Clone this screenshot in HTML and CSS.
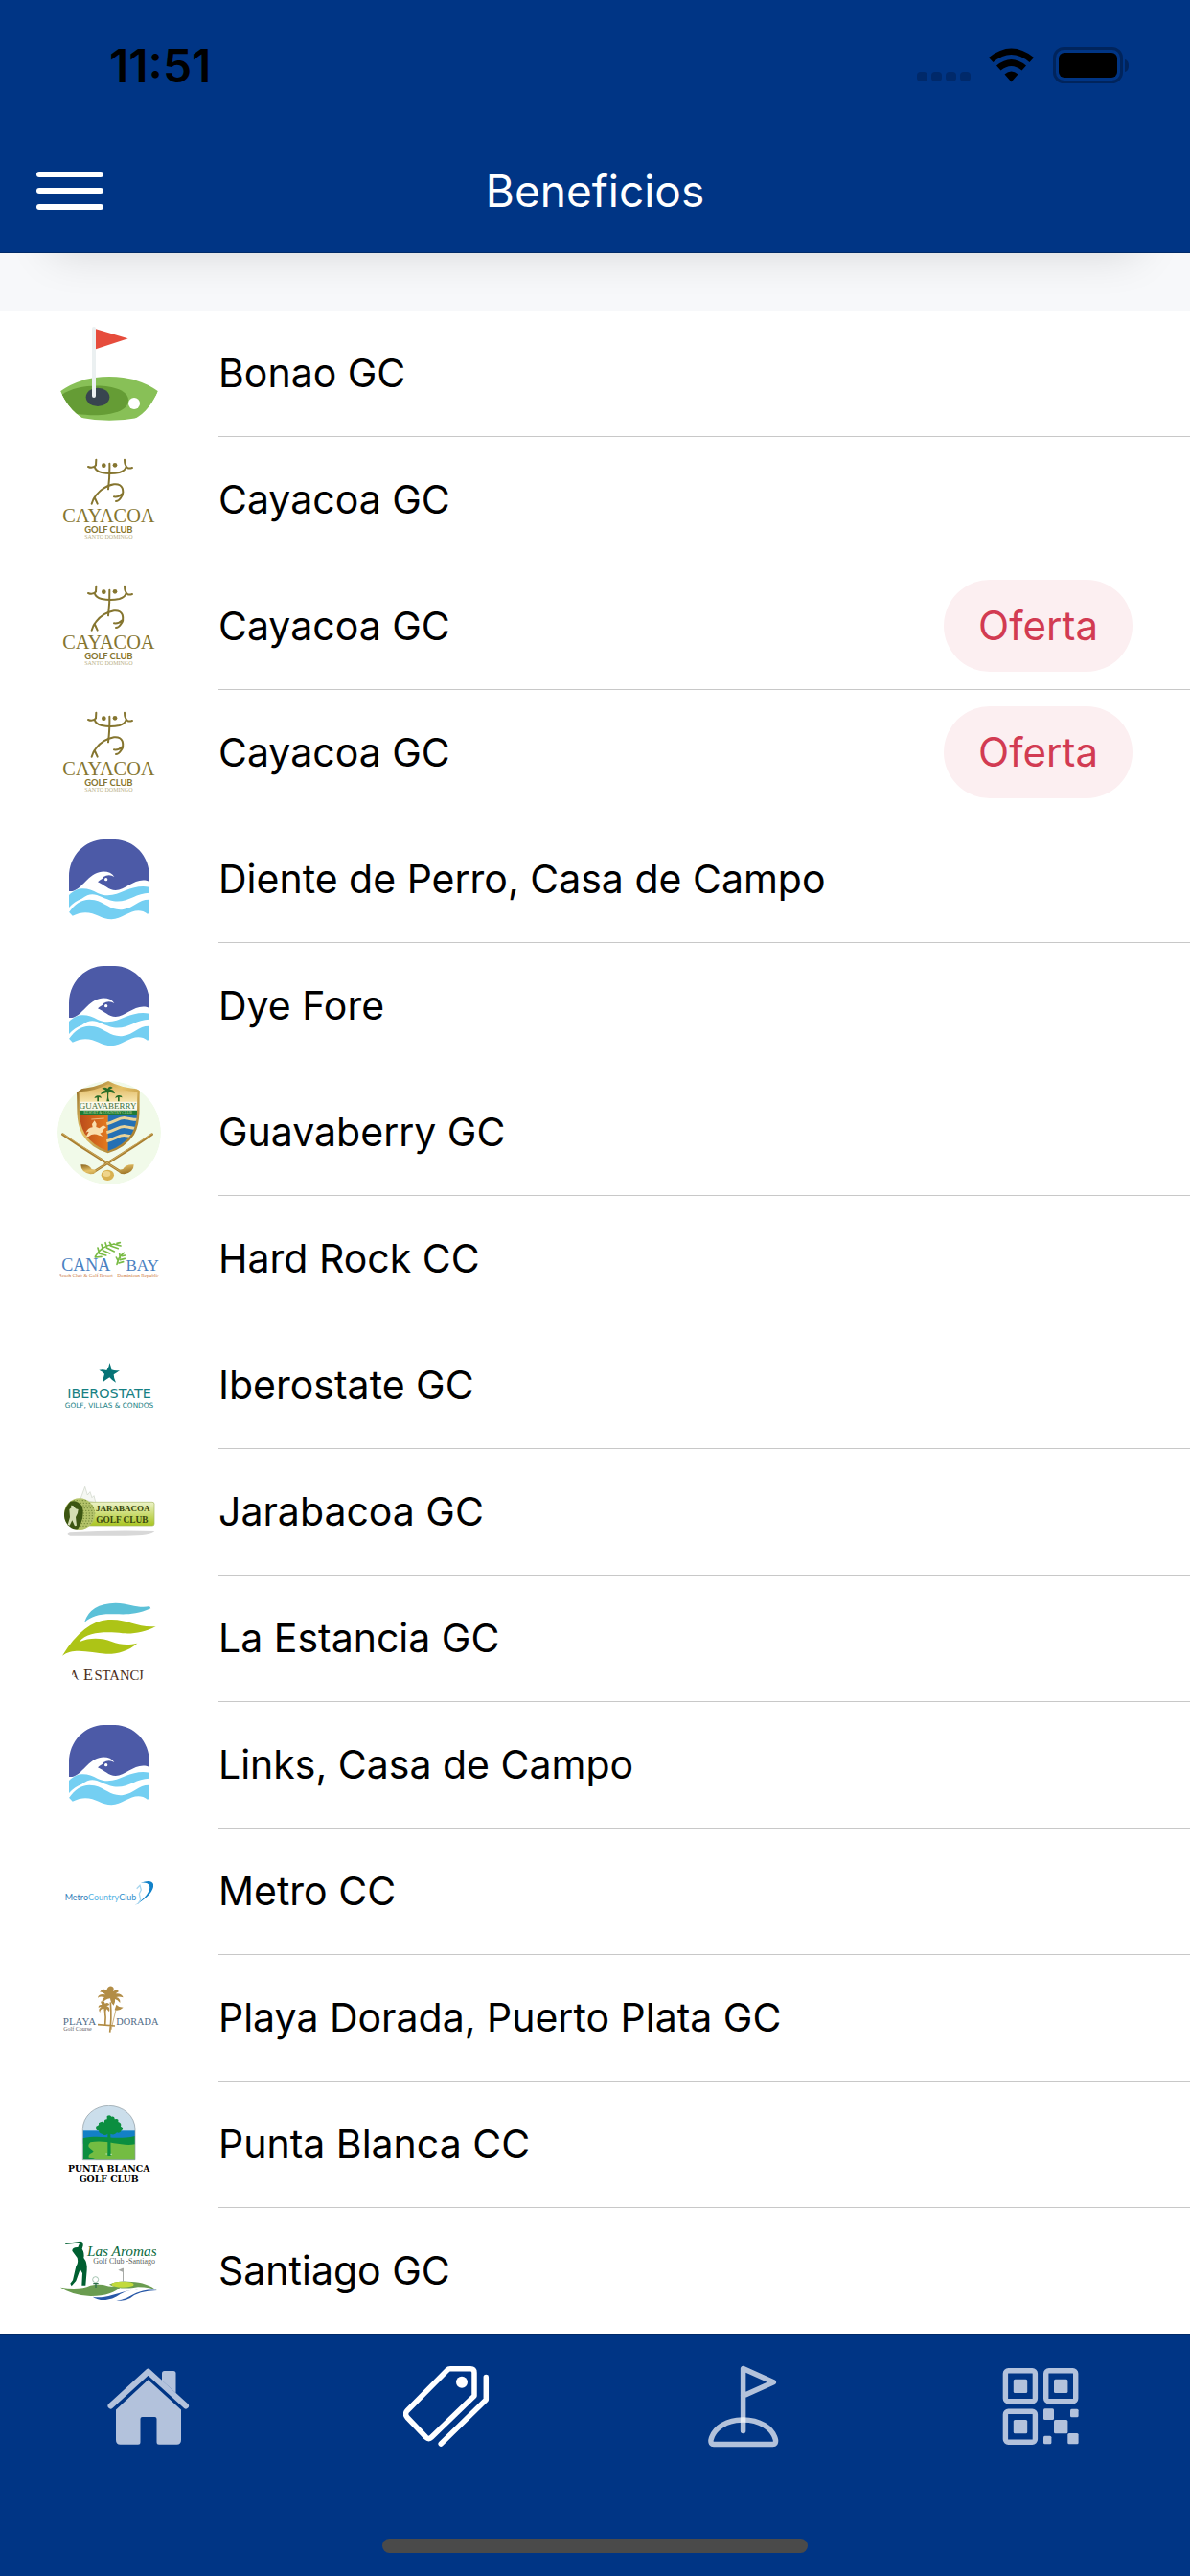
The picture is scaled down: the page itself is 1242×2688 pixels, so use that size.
FILE: index.html
```html
<!DOCTYPE html>
<html lang="es">
<head>
<meta charset="UTF-8" />
<meta name="viewport" content="width=device-width, initial-scale=1" />
<title>Beneficios</title>
<link rel="stylesheet" href="styles.css">
</head>
<body>
  <!-- logos used by more than one club -->
  <svg class="sprites" aria-hidden="true">
    <symbol id="logo-cayacoa" viewBox="60 429 324 324">
      <g fill="none" stroke="#85752f" stroke-width="6" stroke-linecap="round" stroke-linejoin="round">
        <path d="M156 486q14 6 24-4l1-18M176 486q4 14 22 18q28 6 56 0q18-6 20-16M270 464q0 18 10 26q6 2 14-1" />
        <path d="M223 476q1 40-4 80" />
        <path d="M167 602q4-16 14-27q22-28 56-34q20-2 26 12q6 20-6 32q-6 9-14 9M264 570q-12 12-27 10M176 582l9 20" />
      </g>
      <circle cx="205" cy="482" r="7" fill="#85752f" />
      <circle cx="240" cy="481" r="7" fill="#85752f" />
      <text class="serif" x="220" y="661" font-size="61" fill="#85752f">CAYACOA</text>
      <text class="sans bold" x="220" y="693" font-size="28" fill="#85752f">GOLF CLUB</text>
      <text class="serif" x="220" y="712" font-size="18" fill="#b9b088">SANTO DOMINGO</text>
    </symbol>
    <symbol id="logo-campo" viewBox="60 42 324 324">
      <path fill="#4c5aa7" d="M96 240V195C96 128 146 80 204 78h36c60 2 108 50 108 117v15c-40-18-72 26-106 27c-22 0-36-18-56-26q6-6 14-10q2-8 12-10q14-4 26 4q-12-18-40-16c-42 5-60 54-92 61z" />
      <circle cx="212" cy="203" r="5" fill="#fff" />
      <path fill="#74cff2" d="M96 252c30-30 60-22 90-6c30 14 60 4 86-8c26-11 50-16 76-11v18c-44 0-66 32-112 26c-44-10-62-38-100-8c-16 6-28 14-40 28z" />
      <path fill="#74cff2" d="M96 306c20-30 48-46 80-38c34 8 52 34 90 29c34-6 48-32 82-31v40l-5 6c-40-32-72 14-114 16c-40 0-64-40-122-11z" />
    </symbol>
  </svg>

  <header class="header">
    <div class="status-bar">
      <span class="clock">11:51</span>
      <svg class="status-icons" viewBox="0 0 222 38" aria-hidden="true">
        <g fill="#00296a">
          <rect x="0" y="26" width="11" height="10" rx="4" />
          <rect x="15" y="26" width="11" height="10" rx="4" />
          <rect x="30" y="26" width="11" height="10" rx="4" />
          <rect x="45" y="26" width="11" height="10" rx="4" />
        </g>
        <path d="M75 11Q98.500-8 122 11l-4.500 5Q98.500 0 79.500 16z" />
        <path d="M83 19.500q15.500-13 31 0l-4.500 5q-11-9-22 0z" />
        <path d="M91.500 28.500q7-6 14 0l-7 8z" />
        <rect x="143.500" y="1.500" width="70" height="35" rx="10" fill="none" stroke="#00245c" stroke-width="3" />
        <rect x="148" y="6" width="61" height="26" rx="6" />
        <path fill="#00245c" d="M217 13q4 1 4 6.500t-4 6.500z" />
      </svg>
    </div>
    <div class="nav-bar">
      <button class="menu" type="button" aria-label="Menú"><span></span><span></span><span></span></button>
      <h1>Beneficios</h1>
    </div>
  </header>

  <main>
    <div class="spacer"></div>
    <ul class="clubs">
      <li><a href="#">
        <svg class="logo" viewBox="60 33 324 324" aria-hidden="true">
          <path fill="#88c057" d="M69 250Q130 205 222 204q92 1 153 46c-16 34-36 62-62 83q-92 17-178 0c-28-18-50-50-66-83z" />
          <path fill="#659c35" d="M74 260c60-42 208-36 208 18c0 42-86 54-162 42c-20-17-34-38-46-60z" />
          <ellipse cx="186" cy="268" rx="37" ry="29" fill="#38454f" />
          <path stroke="#ebf0f1" stroke-width="12" stroke-linecap="round" d="M174 54v210" />
          <path fill="#e64c3c" d="M180 55l101 30l-101 33z" />
          <circle cx="300" cy="288" r="18" fill="#fff" />
        </svg>
        <div class="cell"><span>Bonao GC</span></div>
      </a></li>
      <li><a href="#">
        <svg class="logo" aria-hidden="true"><use href="#logo-cayacoa" /></svg>
        <div class="cell"><span>Cayacoa GC</span></div>
      </a></li>
      <li><a href="#">
        <svg class="logo" aria-hidden="true"><use href="#logo-cayacoa" /></svg>
        <div class="cell"><span>Cayacoa GC</span><span class="badge">Oferta</span></div>
      </a></li>
      <li><a href="#">
        <svg class="logo" aria-hidden="true"><use href="#logo-cayacoa" /></svg>
        <div class="cell"><span>Cayacoa GC</span><span class="badge">Oferta</span></div>
      </a></li>
      <li><a href="#">
        <svg class="logo" aria-hidden="true"><use href="#logo-campo" /></svg>
        <div class="cell"><span>Diente de Perro, Casa de Campo</span></div>
      </a></li>
      <li><a href="#">
        <svg class="logo" aria-hidden="true"><use href="#logo-campo" /></svg>
        <div class="cell"><span>Dye Fore</span></div>
      </a></li>
      <li><a href="#">
        <svg class="logo" viewBox="60 54 324 324" aria-hidden="true">
          <defs>
            <linearGradient id="gold" x1="0" y1="0" x2="1" y2="1">
              <stop offset="0" stop-color="#8a6420" /><stop offset=".4" stop-color="#e6c267" /><stop offset="1" stop-color="#8f651b" />
            </linearGradient>
            <linearGradient id="sand" x1="0" y1="0" x2="0" y2="1">
              <stop offset="0" stop-color="#d9ad50" /><stop offset="1" stop-color="#f8e6ae" />
            </linearGradient>
            <linearGradient id="rust" x1="0" y1="0" x2="1" y2="0">
              <stop offset="0" stop-color="#b6461a" /><stop offset="1" stop-color="#e47a1e" />
            </linearGradient>
            <clipPath id="shield"><path d="M127 88q54-2 92-24q38 22 92 24c-4 54 4 92-18 130q-26 38-75 55q-49-17-73-55c-22-38-14-76-18-130z" /></clipPath>
          </defs>
          <circle cx="222" cy="216" r="162" fill="#f1fae9" />
          <g fill="none" stroke="#a87e30" stroke-width="8" stroke-linecap="round">
            <path d="M76 221l50 34l136 86M356 221l-50 34l-136 86" />
            <path stroke="#dfc070" stroke-width="2" d="M76 219l180 118M356 219l-180 118" />
          </g>
          <path fill="url(#gold)" d="M133 316q26-2 34 14l12 2q4 12-16 14q-30-6-30-30zM299 316q-26-2-34 14l-12 2q-4 12 16 14q30-6 30-30z" />
          <path fill="url(#gold)" d="M119 80q60-4 100-26q40 22 99 26c-4 54 6 96-18 142q-28 42-82 58q-54-16-80-58c-24-46-14-88-19-142z" />
          <g clip-path="url(#shield)">
            <path fill="url(#sand)" d="M120 60h200v60H120z" />
            <path fill="url(#rust)" d="M120 160h98v120h-98z" />
            <path fill="#2570b4" d="M218 160h100v120H218z" />
            <path fill="none" stroke="#ead398" stroke-width="9" d="M214 188c28-6 38-20 58-18s30 8 44 4M214 215c28-6 38-20 58-18s30 8 44 4M214 242c28-6 38-20 58-18s30 8 44 4" />
            <path fill="#fbf9ec" d="M120 119h200v28H120z" />
            <path fill="#1e7a36" d="M120 146h200v16H120z" />
          </g>
          <path fill="#286c27" d="M214 118q4-18 1-28l-20 6q4-12 16-12l-12-8q12-4 18 2q6-12 16-3l-10 6q14-2 17 13l-19-6q-4 18 2 30zM184 118v-12l-9 2q4-9 11-8q10-2 12 7l-9-2v13zM249 118v-13l-9 2q4-9 11-8q10-2 12 7l-9-2v14z" />
          <path fill="#f9dfae" d="M148 218q6-18 22-19l-2-10l8-11l6 10l-1 10l10 4l12-9l10 6l-8 5q-2 12-12 14l9 9l-12-3q-12-6-24-2l-10 7l-6-2l8-14q-6-2-10 5z" />
          <path stroke="#f9dfae" stroke-width="2" d="M166 174l40-3" />
          <text class="serif" x="218" y="141" font-size="27" fill="#426f37">GUAVABERRY</text>
          <text class="serif" x="218" y="157" font-size="12" fill="#c3dca6">RESORT &amp; COUNTRY CLUB</text>
          <ellipse cx="217" cy="349" rx="20" ry="17" fill="#d8b150" />
          <ellipse cx="214" cy="345" rx="12" ry="9" fill="#efd58b" />
        </svg>
        <div class="cell"><span>Guavaberry GC</span></div>
      </a></li>
      <li><a href="#">
        <svg class="logo" viewBox="60 450 324 324" aria-hidden="true">
          <g fill="none" stroke="#79bb45" stroke-width="5" stroke-linecap="round">
            <path d="M178 604q18-34 60-40M190 590l-4-14M202 580l-4-14M214 572l-4-12M227 565l-4-6M178 606l20-2M190 594l22 6M202 584l22 10M214 576l24 12M226 570l24 8M236 564l22 6M246 562l10-2" />
            <path d="M246 628q4-24 22-36M250 618l-6-12M256 608l-2-14M252 624l14-4M256 614l15-4M262 602l10-2" />
          </g>
          <text class="serif" x="149" y="649" font-size="54" fill="#4a81c1">CANA</text>
          <text class="serif" x="326" y="649" font-size="51" fill="#4a81c1">BAY</text>
          <text class="serif" x="221" y="668" font-size="16" fill="#cf8247">Beach Club &amp; Golf Resort - Dominican Republic</text>
        </svg>
        <div class="cell"><span>Hard Rock CC</span></div>
      </a></li>
      <li><a href="#">
        <svg class="logo" viewBox="60 66 324 324" aria-hidden="true">
          <path fill="#067477" d="M223 156q5 12 6 22q12 4 26 2q-10 8-19 13q0 12 7 25q-12-6-20-16q-10 6-21 15q1-14 5-26q-6-8-17-12q12-3 24 1q8-10 9-24z" />
          <text class="wide" x="222" y="267" font-size="43" fill="#168083">IBEROSTATE</text>
          <text class="wide" x="222" y="297" font-size="22" fill="#168083">GOLF, VILLAS &amp; CONDOS</text>
        </svg>
        <div class="cell"><span>Iberostate GC</span></div>
      </a></li>
      <li><a href="#">
        <svg class="logo" viewBox="60 462 324 324" aria-hidden="true">
          <defs>
            <linearGradient id="lime" x1="0" y1="0" x2="0" y2="1">
              <stop offset="0" stop-color="#edf3c8" /><stop offset="1" stop-color="#a9c520" />
            </linearGradient>
          </defs>
          <path fill="#d8d8d8" d="M98 688q130-8 266-4q-10 14-90 14H100q-16-4-2-10z" />
          <path fill="#f5f7f3" stroke="#cbd3c5" stroke-width="2" d="M132 582l14-38l8 26l8-10l6 18l6-6l6 22z" />
          <rect x="150" y="592" width="213" height="74" rx="6" fill="url(#lime)" stroke="#a5b660" stroke-width="2" />
          <ellipse cx="129" cy="629" rx="48" ry="49" fill="#b4c36a" />
          <path fill="none" stroke="#75893a" stroke-width="3" stroke-dasharray="4 5" d="M110 587h44M104 595h62M130 603h42M134 611h42M138 619h38M140 627h38M140 635h36M140 643h34M138 651h32M134 659h30M130 667h22" />
          <path fill="#3c5512" d="M100 590q-34 38-8 74q16 16 32 12q22-34 14-70q-16-22-38-16z" />
          <path fill="#d5deb4" d="M102 602l7 1l8 10l8 2l-2 12l-6 12l3 26l-6 2l-8-18l-8 16l-6-2l7-24l-2-24l7-6z" />
          <text class="serif bold" x="265" y="621" font-size="27" fill="#36450f">JARABACOA</text>
          <text class="serif bold" x="262" y="657" font-size="28" fill="#36450f">GOLF CLUB</text>
        </svg>
        <div class="cell"><span>Jarabacoa GC</span></div>
      </a></li>
      <li><a href="#">
        <svg class="logo" viewBox="60 78 324 324" aria-hidden="true">
          <defs><clipPath id="cut"><path d="M104 330h229v45H104z" /></clipPath></defs>
          <path fill="#5cc1d8" d="M144 189q18-60 98-61c46 2 72 18 107 10l3 7c-48 22-82 18-112 18c-44-2-72 4-96 26z" />
          <path fill="#adc416" d="M75 293q66-108 144-113c60-4 90 26 149 21c-36 20-70 24-104 22c-42-5-110-8-136 27c34-16 74-12 100-2c30 12 54 12 82 6c-30 26-64 34-98 33c-46-2-100-22-137 6z" />
          <g clip-path="url(#cut)" fill="#4b2d20">
            <text class="serif" x="112" y="368" font-size="42">A</text>
            <text class="serif" x="156" y="368" font-size="49">E</text>
            <text class="serif" x="253" y="368" font-size="44">STANCI</text>
          </g>
        </svg>
        <div class="cell"><span>La Estancia GC</span></div>
      </a></li>
      <li><a href="#">
        <svg class="logo" aria-hidden="true"><use href="#logo-campo" /></svg>
        <div class="cell"><span>Links, Casa de Campo</span></div>
      </a></li>
      <li><a href="#">
        <svg class="logo" viewBox="60 -30 324 324" aria-hidden="true">
          <text class="sans" x="195" y="160" font-size="27" fill="#2f7cb8">Metro<tspan fill="#56b4e4">Country</tspan><tspan fill="#2f8fcd">Club</tspan></text>
          <path fill="#1282c9" d="M320 104q34-12 40 4q4 30-58 67q52-38 46-62q-6-12-28-9z" />
          <path fill="none" stroke="#a9d7ef" stroke-width="4" d="M308 122l10-10l4 14l-6 12l4 20l-8 12" />
        </svg>
        <div class="cell"><span>Metro CC</span></div>
      </a></li>
      <li><a href="#">
        <svg class="logo" viewBox="60 366 324 324" aria-hidden="true">
          <path fill="#b28d46" d="M225 466q-16 2-24 14q-4-10 6-18q-14-4-21 2q2-14 24-10q-10-10-18-8q8-14 22-6q4-14 16-12q10 4 4 16q12-8 18 0l-10 7q18-2 24 12q-14-4-22-1q14 4 12 18q-8-10-16-12q2 10-4 20q-10-8-11-22z" />
          <path fill="#b28d46" d="M205 498q-12 0-12 12q-8-10 4-17q-10-2-8 4q-4-12 10-11l-4-10q12-4 14 6q10-6 14 4l-9 4q12 2 8 18l-8-9q-4 6-3 15zM244 486q8 8 22 8q-12 12-27 8z" />
          <path fill="none" stroke="#b28d46" stroke-width="5" d="M208 500q4 24 1 50M226 478q4 50-2 94M186 548q26 2 54 4" />
          <path fill="none" stroke="#b28d46" stroke-width="2" d="M246 488l-18 76" />
          <text class="serif" x="129" y="549" font-size="33" fill="#526c87">PLAYA</text>
          <text class="serif" x="310" y="549" font-size="31" fill="#526c87">DORADA</text>
          <text class="serif" x="123" y="566" font-size="18" fill="#5f6266">Golf Course</text>
        </svg>
        <div class="cell"><span>Playa Dorada, Puerto Plata GC</span></div>
      </a></li>
      <li><a href="#">
        <svg class="logo" viewBox="60 42 324 324" aria-hidden="true">
          <defs><clipPath id="arch"><path d="M139 251v-96a82 73 0 0 1 164 0v96z" /></clipPath></defs>
          <g clip-path="url(#arch)">
            <path fill="#cbdeeb" d="M139 80h164v80H139z" />
            <path fill="#1380c6" d="M139 160h164v40H139z" />
            <path fill="#0b8e40" d="M139 184c60-14 94 8 164-7v74H139z" />
            <path fill="#74bc42" d="M163 196c50-10 94 14 140 6v49H182q-8-6-24-6c-4-14 18-12 14-22c-12-10-22-14-9-27z" />
          </g>
          <path fill="none" stroke="#8a979f" stroke-width="2" d="M139 251v-96a82 73 0 0 1 164 0v96z" />
          <path fill="#0b8e40" d="M217 240v-70q-8 8-18 0q-10-1-10-10q-12-2-8-14q10-2 8-10q10-8 18-2q-2-10 8-10v-10q10-6 14 2q10-2 10 8q14-4 11 8q12 4 8 14q12 6 2 14q-4 10-14 6q-8 10-20 4l1 70z" />
          <path stroke="#b9dfb7" stroke-width="3" d="M211 234h5M226 235h5" />
          <text class="slab" x="221" y="287" font-size="28">PUNTA BLANCA</text>
          <text class="slab" x="221" y="321" font-size="28">GOLF CLUB</text>
        </svg>
        <div class="cell"><span>Punta Blanca CC</span></div>
      </a></li>
      <li><a href="#">
        <svg class="logo" viewBox="60 438 324 324" aria-hidden="true">
          <path fill="#005f31" d="M84 513l38-5q12-4 17 2q4 10-2 20q8 12 5 28q12 14 10 38l-4 48h-12l2-38l-7-12l-13 36l-14 16l-4-8l8-10l10-44q8-10 4-26l-16-22q0-12 18-11l5-12l-8-1l-36 4z" />
          <path fill="#6a9c50" d="M69 650q60 10 94-6q20-4 40-2q28 10 60 3q-34 34-100 33q-60-4-94-28zM222 641q30-14 70-8c30 0 62 12 80 28q-20-12-60-12c-30 6-66 6-90-8z" />
          <ellipse cx="264" cy="641" rx="35" ry="9" fill="#c2da3b" />
          <g fill="#2858a7">
            <path d="M170 680c60 10 96-34 202-23q-80-6-116 15c-24 18-60 26-86 8z" />
            <path d="M244 690c40 4 60-40 128-30q-60 2-84 24q-22 12-44 6z" />
          </g>
          <circle cx="179" cy="626" r="9" fill="#fff" stroke="#7aa78b" stroke-width="2" />
          <path stroke="#2d6f49" stroke-width="4" d="M180 637v14M172 638h16" />
          <path fill="#a7aaa7" d="M264 590v42h3v-42zM250 596l14-6v12z" />
          <text class="script" x="262" y="553" font-size="46" fill="#0c6a3d">Las Aromas</text>
          <text class="serif" x="269" y="577" font-size="24" fill="#5b5f5c">Golf Club -Santiago</text>
        </svg>
        <div class="cell"><span>Santiago GC</span></div>
      </a></li>
    </ul>
  </main>

  <footer class="footer">
    <nav class="tabs">
      <a href="#" aria-label="Inicio">
        <svg viewBox="0 0 90 90">
          <path fill="none" stroke="currentColor" stroke-width="6" stroke-linecap="round" stroke-linejoin="round" d="M5.500 44.500L44.600 8.700L84 44.500" />
          <path fill="currentColor" d="M59 18V10.500Q59 8 61.500 8H71q2.500 0 2.500 2.500V31z" />
          <path fill="currentColor" d="M44.600 17.300L79 48.500V80q0 4.700-4.500 4.700H56q-2.500 0-2.500-2.500V58q0-2-2-2H38.500q-2 0-2 2v24.200q0 2.500-2.500 2.500H15.500Q11 84.700 11 80V48.500z" />
        </svg>
      </a>
      <a class="active" href="#" aria-label="Beneficios" aria-current="page">
        <svg viewBox="0 0 90 90">
          <g fill="none" stroke="currentColor" stroke-width="5.500" stroke-linecap="round" stroke-linejoin="round">
            <path d="M49 5.800H70q4 0 4 4V34L29.500 77q-3 3-6 0L4 56.500q-3-3.500 0-7L46 7q1-1.200 3-1.200z" />
            <path d="M86.300 14.500V38L39.200 84" />
          </g>
          <circle cx="61" cy="19.700" r="6" fill="currentColor" />
        </svg>
      </a>
      <a href="#" aria-label="Campos">
        <svg viewBox="0 0 90 90">
          <g fill="none" stroke="#fff" stroke-opacity=".7" stroke-width="5.500" stroke-linecap="round" stroke-linejoin="round">
            <path d="M44.600 34L76.300 19.700L44.600 5.500V70.500" />
            <path d="M11 80C14 67 28 59 44.600 59S75.500 67 78.500 80q.5 4.500-3 4.500H14q-3.500 0-3-4.500z" />
          </g>
        </svg>
      </a>
      <a href="#" aria-label="Código QR">
        <svg viewBox="0 0 90 90">
          <g fill="none" stroke="currentColor" stroke-width="5.400">
            <rect x="7.400" y="7.700" width="31" height="32" rx="3" />
            <rect x="49.700" y="7.700" width="31" height="32" rx="3" />
            <rect x="7.400" y="50.300" width="31" height="32" rx="3" />
          </g>
          <g fill="currentColor">
            <rect x="15.800" y="16.700" width="14.400" height="14.300" rx="1.500" />
            <rect x="58" y="16.700" width="14.400" height="14.300" rx="1.500" />
            <rect x="15.800" y="59" width="14.400" height="14.300" rx="1.500" />
            <rect x="47" y="47.300" width="11" height="11.700" rx="1.500" />
            <rect x="75" y="47.700" width="8.600" height="8.600" rx="1.500" />
            <rect x="58" y="59" width="14.400" height="14.300" rx="1.500" />
            <rect x="47" y="75.700" width="8.400" height="8.600" rx="1.500" />
            <rect x="72.300" y="73" width="11.300" height="11.300" rx="1.500" />
          </g>
        </svg>
      </a>
    </nav>
    <div class="home-indicator"></div>
  </footer>
</body>
</html>
```
FILE: styles.css
```css
* { box-sizing: border-box; }
body {
  font-family: Inter, "Liberation Sans", sans-serif;
  font-size: 41px; color: #000; background: #fff;
  margin: 0; display: flex; flex-direction: column;
  min-height: 100vh;
}
a {
  color: inherit; text-decoration: none;
}
.sprites {
  display: none;
}

/* header */
.header {
  background: #003585; border-bottom: 1px solid #002a69;
}
.status-bar {
  display: flex; justify-content: space-between; align-items: center;
  height: 132px; padding: 4px 63px 0 114px;
}
.clock {
  font-size: 48px; font-weight: 600;
}
.status-icons {
  width: 222px; height: 38px;
}
.nav-bar {
  display: grid; grid-template-columns: 1fr auto 1fr; align-items: center;
  height: 131px; padding: 3px 38px 0; color: #fff;
}
.nav-bar h1 {
  margin: 0; font-size: 46px; font-weight: 400;
}
.menu {
  display: flex; flex-direction: column; gap: 11px;
  width: 70px; padding: 0; background: none; border: none;
  cursor: pointer;
}
.menu span {
  height: 6px; border-radius: 3px; background: #fff;
}

/* list */
main {
  flex: 1;
}
.spacer {
  height: 60px; background: #f7f8fa; overflow: hidden;
}
.spacer::before {
  content: ""; display: block; height: 60px; margin: -60px 54px 0;
  box-shadow: 0 0 48px rgba(0,0,0,0.14);
}
.clubs {
  list-style: none; margin: 0; padding: 0;
}
.clubs a {
  display: flex; align-items: center; gap: 60px;
  padding-left: 60px;
}
.logo {
  width: 108px; height: 108px; flex: none; border-radius: 50%;
}
.cell {
  flex: 1; display: flex; justify-content: space-between; align-items: center;
  height: 132px; padding: 0 60px 2px 0;
  border-bottom: 1px solid #c8c8c8;
}
.clubs li:last-child .cell {
  height: 131px; border-bottom: none;
}
.badge {
  padding: 0 36px; border-radius: 48px;
  font-size: 42px; line-height: 96px;
  background: #fceff1; color: #d23b52;
}

/* lettering inside the logos */
.logo text, symbol text {
  text-anchor: middle;
}
.serif { font-family: "Liberation Serif", serif; }
.sans { font-family: Lato, sans-serif; }
.wide { font-family: "DejaVu Sans", sans-serif; }
.slab { font-family: "DejaVu Serif", serif; font-weight: 700; }
.script { font-family: "Liberation Serif", serif; font-style: italic; }
.bold { font-weight: 700; }

/* tab bar */
.footer {
  display: flex; flex-direction: column; justify-content: space-between; align-items: center;
  height: 253px; padding: 30px 0 24px;
  background: #003585; border-top: 1px solid #002a69;
}
.tabs {
  display: grid; grid-template-columns: repeat(4, 1fr);
  width: 100%; color: #b3c2dc;
}
.tabs a {
  display: flex; justify-content: center;
}
.tabs .active {
  color: #fff;
}
.tabs svg {
  width: 90px; height: 90px;
}
.home-indicator {
  width: 444px; height: 15px; border-radius: 8px; background: #4a4a4a;
}
```
